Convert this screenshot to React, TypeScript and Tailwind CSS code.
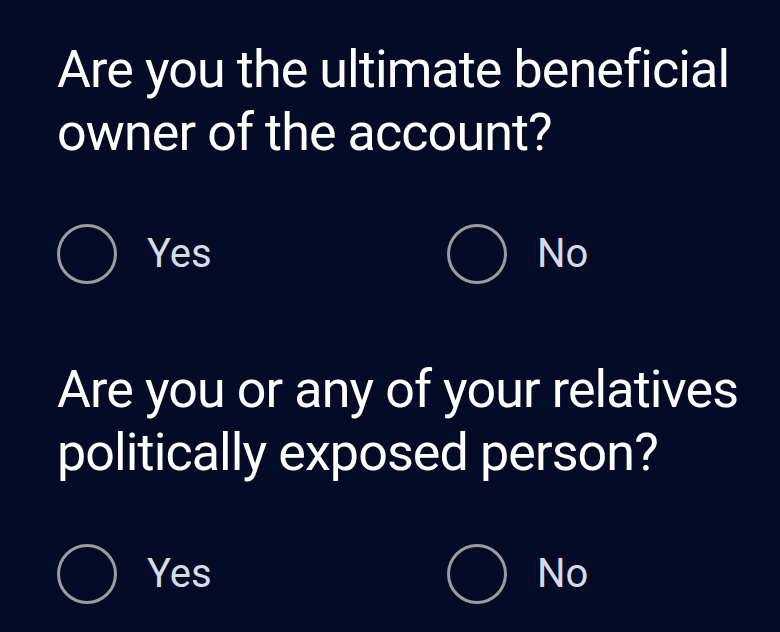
import { useState } from 'react'

const QUESTIONS = [
  { id: 'ubo', text: 'Are you the ultimate beneficial owner of the account?' },
  { id: 'pep', text: 'Are you or any of your relatives politically exposed person?' },
]

function Radio({ label, checked, onClick, wide }: { label: string; checked: boolean; onClick: () => void; wide?: boolean }) {
  return (
    <button onClick={onClick} className={`flex items-center gap-[30px] ${wide ? 'w-[390px]' : ''}`}>
      <span className="w-[60px] h-[60px] rounded-full border-[3px] border-[#9c9c9e] flex items-center justify-center">
        {checked && <span className="w-[34px] h-[34px] rounded-full bg-[#d9dbe5]" />}
      </span>
      <span className="text-[40px] leading-none text-[#d9dbe5]">{label}</span>
    </button>
  )
}

export default function App() {
  const [answers, setAnswers] = useState<Record<string, string>>({})

  return (
    <div className="min-h-[632px] bg-[#030b27] pl-[57px] pr-[10px] pt-[38px] font-['Roboto',sans-serif]">
      {QUESTIONS.map((q, i) => (
        <div key={q.id} className={i > 0 ? 'mt-[74px]' : ''}>
          <h2 className="text-[52px] leading-[63px] text-white font-normal tracking-[-0.9px]">{q.text}</h2>
          <div className="flex mt-[60px]">
            <Radio wide label="Yes" checked={answers[q.id] === 'yes'} onClick={() => setAnswers({ ...answers, [q.id]: 'yes' })} />
            <Radio label="No" checked={answers[q.id] === 'no'} onClick={() => setAnswers({ ...answers, [q.id]: 'no' })} />
          </div>
        </div>
      ))}
    </div>
  )
}
